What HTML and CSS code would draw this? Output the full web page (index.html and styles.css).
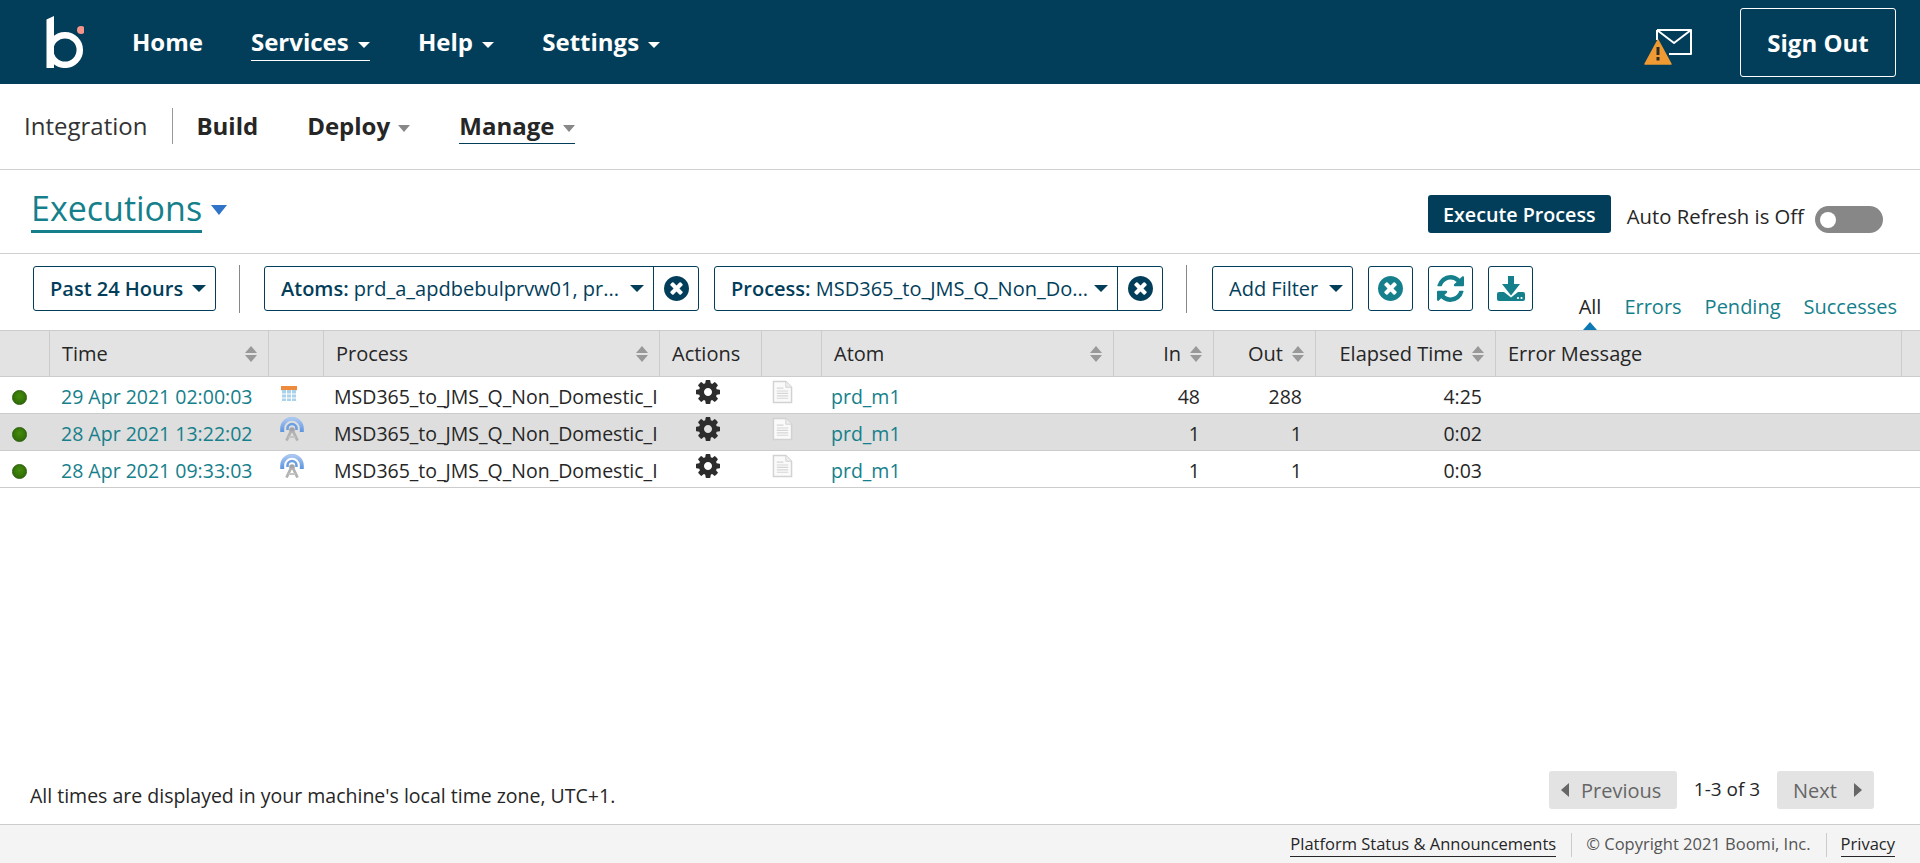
FILE: index.html
```html
<!DOCTYPE html>
<html lang="en">
<head>
<meta charset="utf-8">
<title>Executions</title>
<link rel="stylesheet" href="styles.css">
</head>
<body>
<svg class="defs" width="0" height="0" aria-hidden="true">
  <defs>
    <linearGradient id="arc-grad" x1="0" y1="0" x2="0" y2="1">
      <stop offset="0" stop-color="#a9c6f0"/><stop offset="1" stop-color="#5d94e0"/>
    </linearGradient>
    <symbol id="i-cog" viewBox="128 128 1536 1536"><path d="M1152 896q0-106-75-181t-181-75-181 75-75 181 75 181 181 75 181-75 75-181zm512-109v222q0 12-8 23t-20 13l-185 28q-19 54-39 91 35 50 107 138 10 12 10 25t-9 23q-27 37-99 108t-94 71q-12 0-26-9l-138-108q-44 23-91 38-16 136-29 186-7 28-36 28h-222q-14 0-24.5-8.5t-11.5-21.5l-28-184q-49-16-90-37l-141 107q-10 9-25 9-14 0-25-11-126-114-165-168-7-10-7-23 0-12 8-23 15-21 51-66.5t54-70.5q-27-50-41-99l-183-27q-13-2-21-12.5t-8-23.5v-222q0-12 8-23t19-13l186-28q14-46 39-92-40-57-107-138-10-12-10-24 0-10 9-23 26-36 98.5-107.5t94.5-71.5q13 0 26 10l138 107q44-23 91-38 16-136 29-186 7-28 36-28h222q14 0 24.5 8.5t11.5 21.5l28 184q49 16 90 37l142-107q9-9 24-9 13 0 25 10 129 119 165 170 7 8 7 22 0 12-8 23-15 21-51 66.5t-54 70.5q26 50 41 98l183 28q13 2 21 12.5t8 23.5z"/></symbol>
    <symbol id="i-x" viewBox="128 128 1536 1536"><path d="M1277 1122q0-26-19-45l-181-181 181-181q19-19 19-45 0-27-19-46l-90-90q-19-19-46-19-26 0-45 19l-181 181-181-181q-19-19-45-19-27 0-46 19l-90 90q-19 19-19 46 0 26 19 45l181 181-181 181q-19 19-19 45 0 27 19 46l90 90q19 19 46 19 26 0 45-19l181-181 181 181q19 19 45 19 27 0 46-19l90-90q19-19 19-46zm387-226q0 209-103 385.5t-279.5 279.5-385.5 103-385.5-103-279.5-279.5-103-385.5 103-385.5 279.5-279.5 385.5-103 385.5 103 279.5 279.5 103 385.5z"/></symbol>
    <symbol id="i-refresh" viewBox="128 128 1536 1536"><path d="M1639 1056q0 5-1 7-64 268-268 434.5t-478 166.5q-146 0-282.5-55t-243.5-157l-129 129q-19 19-45 19t-45-19-19-45v-448q0-26 19-45t45-19h448q26 0 45 19t19 45-19 45l-137 137q71 66 161 102t187 36q134 0 250-65t186-179q11-17 53-117 8-23 30-23h192q13 0 22.5 9.5t9.5 22.5zm25-800v448q0 26-19 45t-45 19h-448q-26 0-45-19t-19-45 19-45l138-138q-148-137-349-137-134 0-250 65t-186 179q-11 17-53 117-8 23-30 23h-199q-13 0-22.5-9.5t-9.5-22.5v-7q65-268 270-434.5t480-166.5q146 0 284 55.5t245 156.5l130-129q19-19 45-19t45 19 19 45z"/></symbol>
    <symbol id="i-doc" viewBox="0 0 22 24">
      <path d="M1.5 1h13l6 6v16h-19z" fill="#fafafa" stroke="#d2d2d2" stroke-width="1.5"/>
      <path d="M14.5 1v6h6" fill="#eee" stroke="#d2d2d2"/>
      <path d="M5 8h7M5 11h12M5 13.5h12M5 16h12M5 18.5h12" stroke="#d6d6d6" stroke-width="1.2"/>
    </symbol>
    <symbol id="i-antenna" viewBox="0 0 24 24">
      <path d="M2.200 15v-3.500a9.800 9.800 0 0 1 19.600 0V15" fill="none" stroke="url(#arc-grad)" stroke-width="4"/>
      <path d="M7.500 13v-1.500a4.500 4.500 0 0 1 9 0V13" fill="none" stroke="#6a9fe4" stroke-width="2.600"/>
      <circle cx="12" cy="13" r="2.800" fill="#a4a4a4"/>
      <path d="M11 14l-4.500 9.500M13 14l4.500 9.500" stroke="#b2b2b2" stroke-width="2.800" fill="none"/>
      <path d="M8.500 20h7" stroke="#c4c4c4" stroke-width="2" fill="none"/>
    </symbol>
  </defs>
</svg>

<header class="topbar">
  <svg class="logo" viewBox="0 0 38 52" width="38" height="52" role="img" aria-label="Boomi">
    <path class="logo-b" d="M0.500 3.500 8 0V52H0.500Z"/>
    <circle class="logo-ring" cx="19" cy="34" r="14.800"/>
    <circle class="logo-dot" cx="35" cy="14" r="4"/>
  </svg>
  <nav class="topnav">
    <a class="topnav-item">Home</a>
    <a class="topnav-item is-active">Services <i class="caret caret-white"></i></a>
    <a class="topnav-item">Help <i class="caret caret-white"></i></a>
    <a class="topnav-item">Settings <i class="caret caret-white"></i></a>
  </nav>
  <div class="topbar-right">
    <svg class="notice" viewBox="0 0 49 38" width="49" height="38" aria-label="Notifications">
      <path d="M13 3h34v24H25M13 3v10M13 3l17 13L47 3" fill="none" stroke="#fff" stroke-width="2" stroke-linejoin="round"/>
      <path d="M14 13 27 37H1Z" fill="#ef9a32" stroke="#ef9a32" stroke-width="1.500" stroke-linejoin="round"/>
      <path d="M12.500 20h3v8h-3zM12.500 30h3v3.500h-3z" fill="#2a2a28"/>
    </svg>
    <button class="signout">Sign Out</button>
  </div>
</header>

<div class="subnav">
  <span class="subnav-app">Integration</span>
  <span class="subnav-sep"></span>
  <a class="subnav-item">Build</a>
  <a class="subnav-item">Deploy <i class="caret caret-grey"></i></a>
  <a class="subnav-item is-active">Manage <i class="caret caret-grey"></i></a>
</div>

<div class="titlebar">
  <h1 class="title">Executions</h1>
  <i class="title-caret"></i>
  <div class="title-actions">
    <button class="execute">Execute Process</button>
    <span class="refresh-label">Auto Refresh is Off</span>
    <span class="toggle"><span class="toggle-knob"></span></span>
  </div>
</div>

<div class="toolbar">
  <button class="btn btn-range"><b>Past 24 Hours</b> <i class="caret caret-dark"></i></button>
  <span class="tool-sep"></span>
  <div class="filter filter-atoms">
    <div class="filter-main"><span class="filter-text"><b>Atoms:</b> prd_a_apdbebulprvw01, pr...</span><i class="caret caret-dark"></i></div>
    <button class="filter-clear"><svg class="icon-25 fill-navy"><use href="#i-x"/></svg></button>
  </div>
  <div class="filter filter-process">
    <div class="filter-main"><span class="filter-text"><b>Process:</b> MSD365_to_JMS_Q_Non_Do...</span><i class="caret caret-dark"></i></div>
    <button class="filter-clear"><svg class="icon-25 fill-navy"><use href="#i-x"/></svg></button>
  </div>
  <span class="tool-sep tool-sep-2"></span>
  <button class="btn btn-add">Add Filter <i class="caret caret-dark"></i></button>
  <button class="btn-icon"><svg class="icon-25 fill-teal"><use href="#i-x"/></svg></button>
  <button class="btn-icon"><svg class="icon-27 fill-teal"><use href="#i-refresh"/></svg></button>
  <button class="btn-icon">
    <svg class="icon-dl" viewBox="0 0 28 25" width="28" height="25">
      <path class="dl-arrow" d="M11 0h6v8h6l-9 11.500L5 8h6z"/>
      <path class="dl-tray" d="M2 16h5l7 5.500 7-5.500h5q2 0 2 2v5q0 2-2 2H2q-2 0-2-2v-5q0-2 2-2z"/>
      <circle cx="21" cy="22" r="1.100" fill="#fff"/><circle cx="24.500" cy="22" r="1.100" fill="#fff"/>
    </svg>
  </button>
  <div class="tabs">
    <a class="tab is-active">All</a>
    <a class="tab">Errors</a>
    <a class="tab">Pending</a>
    <a class="tab">Successes</a>
  </div>
</div>

<table class="grid">
  <colgroup>
    <col class="c-status"><col class="c-time"><col class="c-type"><col class="c-process"><col class="c-actions"><col class="c-doc"><col class="c-atom"><col class="c-in"><col class="c-out"><col class="c-elapsed"><col class="c-error"><col class="c-end">
  </colgroup>
  <thead>
    <tr>
      <th></th>
      <th><span class="th-in">Time<i class="sort"></i></span></th>
      <th></th>
      <th><span class="th-in">Process<i class="sort"></i></span></th>
      <th class="th-actions">Actions</th>
      <th></th>
      <th><span class="th-in">Atom<i class="sort"></i></span></th>
      <th><span class="th-in th-right">In<i class="sort"></i></span></th>
      <th><span class="th-in th-right">Out<i class="sort"></i></span></th>
      <th><span class="th-in th-right">Elapsed Time<i class="sort"></i></span></th>
      <th>Error Message</th>
      <th></th>
    </tr>
  </thead>
  <tbody>
    <tr>
      <td class="td-status"><i class="dot"></i></td>
      <td><a class="link">29 Apr 2021 02:00:03</a></td>
      <td class="td-icon">
        <svg class="cal" viewBox="0 0 16 16" width="16" height="16">
          <rect width="16" height="16" fill="#a9d3ea"/>
          <rect width="16" height="4" fill="#ee8a3c"/>
          <path d="M0.500 4.500v11h15v-11M5.500 4v12M10.500 4v12M0 8h16M0 12h16" stroke="#fff" fill="none"/>
        </svg>
      </td>
      <td class="td-process"><span class="clip">MSD365_to_JMS_Q_Non_Domestic_Invoices</span></td>
      <td class="td-gear"><svg class="gear"><use href="#i-cog"/></svg></td>
      <td class="td-icon"><svg class="doc"><use href="#i-doc"/></svg></td>
      <td class="td-atom"><a class="link">prd_m1</a></td>
      <td class="td-r">48</td>
      <td class="td-r">288</td>
      <td class="td-r">4:25</td>
      <td></td><td></td>
    </tr>
    <tr class="is-selected">
      <td class="td-status"><i class="dot"></i></td>
      <td><a class="link">28 Apr 2021 13:22:02</a></td>
      <td class="td-icon"><svg class="antenna"><use href="#i-antenna"/></svg></td>
      <td class="td-process"><span class="clip">MSD365_to_JMS_Q_Non_Domestic_Invoices</span></td>
      <td class="td-gear"><svg class="gear"><use href="#i-cog"/></svg></td>
      <td class="td-icon"><svg class="doc"><use href="#i-doc"/></svg></td>
      <td class="td-atom"><a class="link">prd_m1</a></td>
      <td class="td-r">1</td>
      <td class="td-r">1</td>
      <td class="td-r">0:02</td>
      <td></td><td></td>
    </tr>
    <tr>
      <td class="td-status"><i class="dot"></i></td>
      <td><a class="link">28 Apr 2021 09:33:03</a></td>
      <td class="td-icon"><svg class="antenna"><use href="#i-antenna"/></svg></td>
      <td class="td-process"><span class="clip">MSD365_to_JMS_Q_Non_Domestic_Invoices</span></td>
      <td class="td-gear"><svg class="gear"><use href="#i-cog"/></svg></td>
      <td class="td-icon"><svg class="doc"><use href="#i-doc"/></svg></td>
      <td class="td-atom"><a class="link">prd_m1</a></td>
      <td class="td-r">1</td>
      <td class="td-r">1</td>
      <td class="td-r">0:03</td>
      <td></td><td></td>
    </tr>
  </tbody>
</table>

<div class="spacer"></div>

<div class="statusline">
  <span class="tz-note">All times are displayed in your machine's local time zone, UTC+1.</span>
  <div class="pager">
    <button class="page-btn page-prev"><i class="arrow-left"></i>Previous</button>
    <span class="page-count">1-3 of 3</span>
    <button class="page-btn page-next">Next<i class="arrow-right"></i></button>
  </div>
</div>

<footer class="footer">
  <a class="foot-link">Platform Status &amp; Announcements</a>
  <span class="foot-sep"></span>
  <span class="foot-copy">© Copyright 2021 Boomi, Inc.</span>
  <span class="foot-sep"></span>
  <a class="foot-link">Privacy</a>
</footer>
</body>
</html>
```

FILE: styles.css
```css
* { box-sizing: border-box; }
html, body { height: 100%; }
body {
  margin: 0;
  height: 863px;
  overflow: hidden;
  display: flex;
  flex-direction: column;
  background: #fff;
  color: #262626;
  font-family: "Open Sans", "Noto Sans", sans-serif;
  font-size: 19.500px;
}
.defs { position: absolute; }
a { color: inherit; text-decoration: none; }
button { font-family: inherit; cursor: pointer; }
b { font-weight: 600; }

/* carets */
.caret { display: inline-block; width: 0; height: 0; border-style: solid; border-color: transparent; border-width: 7px 7px 0; vertical-align: middle; }
.caret-white { border-top-color: #fff; border-width: 6px 6.500px 0; margin-left: 3px; }
.caret-grey { border-top-color: #888; border-width: 7px 6.500px 0; margin-left: 2px; }
.caret-dark { border-top-color: #023e5a; border-width: 7px 7px 0; flex: none; }

/* top bar */
.topbar { height: 84px; flex: none; background: #023e5a; display: flex; align-items: flex-start; padding-left: 46px; color: #fff; }
.logo { margin-top: 16px; flex: none; }
.logo-b { fill: #fff; }
.logo-ring { fill: none; stroke: #fff; stroke-width: 6.500; }
.logo-dot { fill: #f6948a; }
.topnav { display: flex; gap: 48px; margin-left: 48px; margin-top: 25px; }
.topnav-item { font-size: 24px; font-weight: 700; line-height: 34px; height: 36px; white-space: nowrap; }
.topnav-item.is-active { border-bottom: 1px solid #fff; }
.topbar-right { margin-left: auto; display: flex; align-items: flex-start; padding-right: 24px; }
.notice { margin-top: 27px; margin-right: 47px; }
.signout { margin-top: 8px; width: 156px; height: 69px; background: transparent; border: 1px solid #fff; border-radius: 3px; color: #fff; font-size: 24px; font-weight: 700; padding: 0; }

/* sub nav */
.subnav { height: 86px; flex: none; border-bottom: 1px solid #d0d0d0; display: flex; align-items: flex-start; padding-left: 24px; padding-top: 24px; }
.subnav-app { font-size: 24px; line-height: 35px; color: #333; }
.subnav-sep { width: 1px; height: 36px; background: #999; margin: 0 23px 0 25px; }
.subnav-item { font-size: 24px; font-weight: 700; line-height: 35px; height: 36px; margin-right: 49px; white-space: nowrap; color: #262626; }
.subnav-item.is-active { border-bottom: 1px solid #023e5a; }

/* title row */
.titlebar { height: 84px; flex: none; border-bottom: 1px solid #d0d0d0; display: flex; align-items: flex-start; padding-left: 31px; }
.title { margin: 13px 0 0; height: 50px; font-size: 34px; font-weight: 400; line-height: 50px; color: #15808b; border-bottom: 3px solid #15808b; }
.title-caret { margin: 35px 0 0 9px; width: 0; height: 0; border-style: solid; border-color: #2f74c8 transparent transparent; border-width: 10px 8.500px 0; filter: blur(.4px); }
.title-actions { margin-left: auto; display: flex; align-items: flex-start; padding-right: 37px; padding-top: 25px; }
.execute { width: 183px; height: 38px; background: #023e5a; border: 0; border-radius: 3px; color: #fff; font-size: 19.700px; font-weight: 600; padding: 0; }
.refresh-label { margin-left: 16px; margin-top: 8px; font-size: 20.300px; line-height: 27px; color: #262626; white-space: nowrap; }
.toggle { margin-left: 11px; margin-top: 11px; width: 68px; height: 27px; border-radius: 14px; background: #878787; display: flex; align-items: center; padding-left: 5px; }
.toggle-knob { width: 16px; height: 16px; border-radius: 50%; background: #fff; }

/* tool bar */
.toolbar { height: 76px; flex: none; display: flex; align-items: flex-start; padding: 12px 23px 0 33px; }
.btn { height: 45px; background: #fff; border: 1px solid #023e5a; border-radius: 3px; color: #023e5a; font-size: 20px; padding: 0 9px 0 16px; display: flex; align-items: center; justify-content: space-between; white-space: nowrap; }
.btn-range { width: 183px; }
.btn-add { width: 141px; }
.tool-sep { width: 1px; height: 48px; background: #888; margin: -1px 24px 0 23px; }
.tool-sep-2 { margin-right: 25px; margin-left: 23px; }
.filter { height: 45px; display: flex; border: 1px solid #023e5a; border-radius: 3px; color: #023e5a; font-size: 20px; }
.filter-atoms { width: 435px; margin-right: 15px; }
.filter-process { width: 449px; }
.filter-main { flex: 1; min-width: 0; display: flex; align-items: center; justify-content: space-between; padding: 0 9px 0 16px; white-space: nowrap; }
.filter-text { overflow: hidden; }
.filter-clear { width: 45px; flex: none; background: transparent; border: 0; border-left: 1px solid #023e5a; padding: 0; display: flex; align-items: center; justify-content: center; }
.btn-icon { width: 45px; height: 45px; flex: none; margin-left: 15px; background: #fff; border: 1px solid #023e5a; border-radius: 3px; padding: 0; display: flex; align-items: center; justify-content: center; }
.icon-25 { width: 25px; height: 25px; }
.icon-27 { width: 27px; height: 27px; }
.fill-navy { fill: #023e5a; }
.fill-teal { fill: #15808b; }
.dl-arrow, .dl-tray { fill: #15808b; }
.tabs { margin-left: auto; display: flex; gap: 23px; margin-top: 28px; }
.tab { font-size: 20px; line-height: 26px; color: #15808b; position: relative; height: 36px; white-space: nowrap; }
.tab.is-active { color: #262626; }
.tab.is-active::after { content: ""; position: absolute; left: 4px; bottom: 0; width: 0; height: 0; border-style: solid; border-color: transparent transparent #0e78b4; border-width: 0 7px 8px; }

/* grid */
.grid { width: 1920px; flex: none; table-layout: fixed; border-collapse: separate; border-spacing: 0; }
.c-status { width: 50px; } .c-time { width: 219px; } .c-type { width: 55px; } .c-process { width: 336px; } .c-actions { width: 102px; } .c-doc { width: 60px; } .c-atom { width: 292px; } .c-in { width: 100px; } .c-out { width: 102px; } .c-elapsed { width: 180px; } .c-error { width: 406px; } .c-end { width: 18px; }
.grid th { height: 47px; background: #e3e3e3; border-top: 1px solid #ccc; border-bottom: 1px solid #ccc; border-right: 1px solid #ccc; font-size: 20px; font-weight: 400; text-align: left; padding: 0 10px 0 12px; white-space: nowrap; color: #262626; }
.grid th:last-child { border-right: 0; }
.th-in { display: flex; align-items: center; justify-content: space-between; }
.th-right { justify-content: flex-end; gap: 9px; }
.sort { width: 13px; height: 16px; flex: none; position: relative; display: block; }
.sort::before, .sort::after { content: ""; position: absolute; left: 0; width: 0; height: 0; border-style: solid; border-color: transparent; }
.sort::before { top: 0; border-width: 0 6.500px 7px; border-bottom-color: #999; }
.sort::after { bottom: 0; border-width: 7px 6.500px 0; border-top-color: #999; }
.grid td { height: 37px; padding: 2px 10px 0 11px; border-bottom: 1px solid #ccc; font-size: 19.500px; white-space: nowrap; color: #262626; vertical-align: middle; }
.grid tbody tr.is-selected td { background: #dedede; }
.grid td.td-r { text-align: right; padding-right: 14px; }
.grid td.td-status { padding: 0 11px 0 0; text-align: center; }
.grid td.td-icon { padding: 0 0 0 12px; vertical-align: top; }
.grid td.td-gear { padding: 0 6px 0 0; vertical-align: top; }
.grid td.td-atom { padding-left: 9px; }
.grid td.td-process { overflow: hidden; padding-left: 10px; padding-right: 3px; }
.clip { display: block; overflow: hidden; }
.link { color: #15808b; }
.dot { display: inline-block; width: 15px; height: 15px; border-radius: 50%; background: radial-gradient(circle at 50% 40%, #448c0c, #2a6206); border: 1px solid #285a08; vertical-align: middle; }
.cal { display: block; margin-top: 9px; }
.antenna { display: block; width: 24px; height: 24px; margin: 3px 0 0 -1px; }
.gear { display: block; width: 24px; height: 24px; margin: 3px auto 0; fill: #2c2c2c; }
.doc { display: block; width: 21px; height: 24px; margin: 3px 0 0 -2px; }

.spacer { flex: 1; }

/* bottom line */
.statusline { height: 58px; flex: none; display: flex; align-items: flex-start; padding-left: 30px; padding-right: 46px; }
.tz-note { line-height: 26px; margin-top: 17px; }
.pager { margin-left: auto; display: flex; align-items: flex-start; margin-top: 5px; }
.page-btn { height: 38px; background: #e3e3e3; border: 0; border-radius: 3px; color: #666; font-size: 20px; padding: 0; display: flex; align-items: center; }
.page-prev { width: 128px; padding-left: 12px; gap: 12px; }
.page-next { width: 97px; padding-left: 16px; gap: 17px; }
.page-count { width: 100px; text-align: center; font-size: 19px; line-height: 36px; color: #262626; }
.arrow-left { width: 0; height: 0; border-style: solid; border-color: transparent #666 transparent transparent; border-width: 7px 8px 7px 0; }
.arrow-right { width: 0; height: 0; border-style: solid; border-color: transparent transparent transparent #666; border-width: 7px 0 7px 8px; }

/* footer */
.footer { height: 39px; flex: none; background: #f4f4f4; border-top: 1px solid #ccc; display: flex; align-items: flex-start; justify-content: flex-end; padding: 8px 25px 0 0; font-size: 16.500px; color: #262626; }
.foot-link { line-height: 22px; height: 24px; border-bottom: 1px solid #262626; }
.foot-sep { width: 1px; height: 24px; background: #ccc; margin: 0 14px 0 15px; }
.foot-copy { line-height: 22px; color: #555; }
```
